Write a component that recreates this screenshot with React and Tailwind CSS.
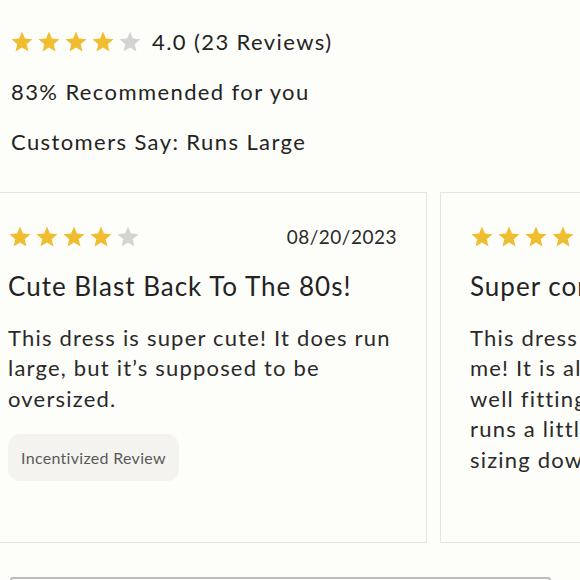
import React from "react";

function Star({ filled }) {
    return (
        <svg width="24" height="24" viewBox="0 0 24 24">
            <polygon
                points="12,1.5 14.9,8.6 22.5,9.2 16.7,14.2 18.5,21.6 12,17.6 5.5,21.6 7.3,14.2 1.5,9.2 9.1,8.6"
                fill={filled ? "#efbd2f" : "#d3d3d1"}
            />
        </svg>
    );
}

function Stars({ count }) {
    return (
        <div className="flex gap-[3px]">
            {[0, 1, 2, 3, 4].map((i) => (
                <Star key={i} filled={i < count} />
            ))}
        </div>
    );
}

export default function App() {
    let reviews = [
        {
            date: "08/20/2023",
            title: "Cute Blast Back To The 80s!",
            body: ["This dress is super cute! It does run", "large, but it’s supposed to be", "oversized."],
            badge: true,
        },
        {
            date: "08/18/2023",
            title: "Super comfy and cute",
            body: [
                "This dress is so flattering on",
                "me! It is also very comfortable and",
                "well fitting. I will say that it",
                "runs a little large so I'd suggest",
                "sizing down.",
            ],
            badge: false,
        },
    ];

    return (
        <div
            className="w-[580px] h-[580px] overflow-hidden bg-[#fdfdfa] text-[#232323]"
            style={{ fontFamily: "Lato, 'Open Sans', sans-serif" }}
        >
            <div className="px-[10px] pt-[29px] flex flex-col gap-[24px] text-[22px] leading-[26px] tracking-[1.4px]">
                <div className="flex items-center gap-[10px]">
                    <Stars count={4} />
                    <span>4.0 (23 Reviews)</span>
                </div>
                <div className="pl-[1px]">83% Recommended for you</div>
                <div className="pl-[1px]">Customers Say: Runs Large</div>
            </div>

            <div className="flex gap-[13px] ml-[-22px] mt-[37px]">
                {reviews.map((r, key) => (
                    <div
                        key={key}
                        className="w-[449px] h-[351px] shrink-0 border border-[#e4e4e1] pl-[29px] pr-[29px] pt-[30px]"
                    >
                        <div className="flex items-center justify-between">
                            <Stars count={4} />
                            <span className="text-[19px] tracking-[0.5px] text-[#2a2a2a]">{r.date}</span>
                        </div>
                        <div className="mt-[18px] text-[26px] leading-[32px] tracking-[1px]">{r.title}</div>
                        <p className="mt-[21px] text-[22px] leading-[30.5px] tracking-[1.2px] text-[#2a2a2a]">
                            {r.body.map((line, i) => (
                                <span key={i} className="block whitespace-nowrap">{line}</span>
                            ))}
                        </p>
                        {r.badge && (
                            <div className="mt-[20px] inline-flex items-center h-[47px] px-[13px] rounded-[12px] bg-[#f4f3f0] text-[16px] text-[#5a5a5a] tracking-[0.3px]">
                                Incentivized Review
                            </div>
                        )}
                    </div>
                ))}
            </div>

            <div className="ml-[10px] mt-[34px] w-[541px] h-[20px] border-2 border-[#bcbcbc] rounded-t-[3px]" />
        </div>
    );
}
